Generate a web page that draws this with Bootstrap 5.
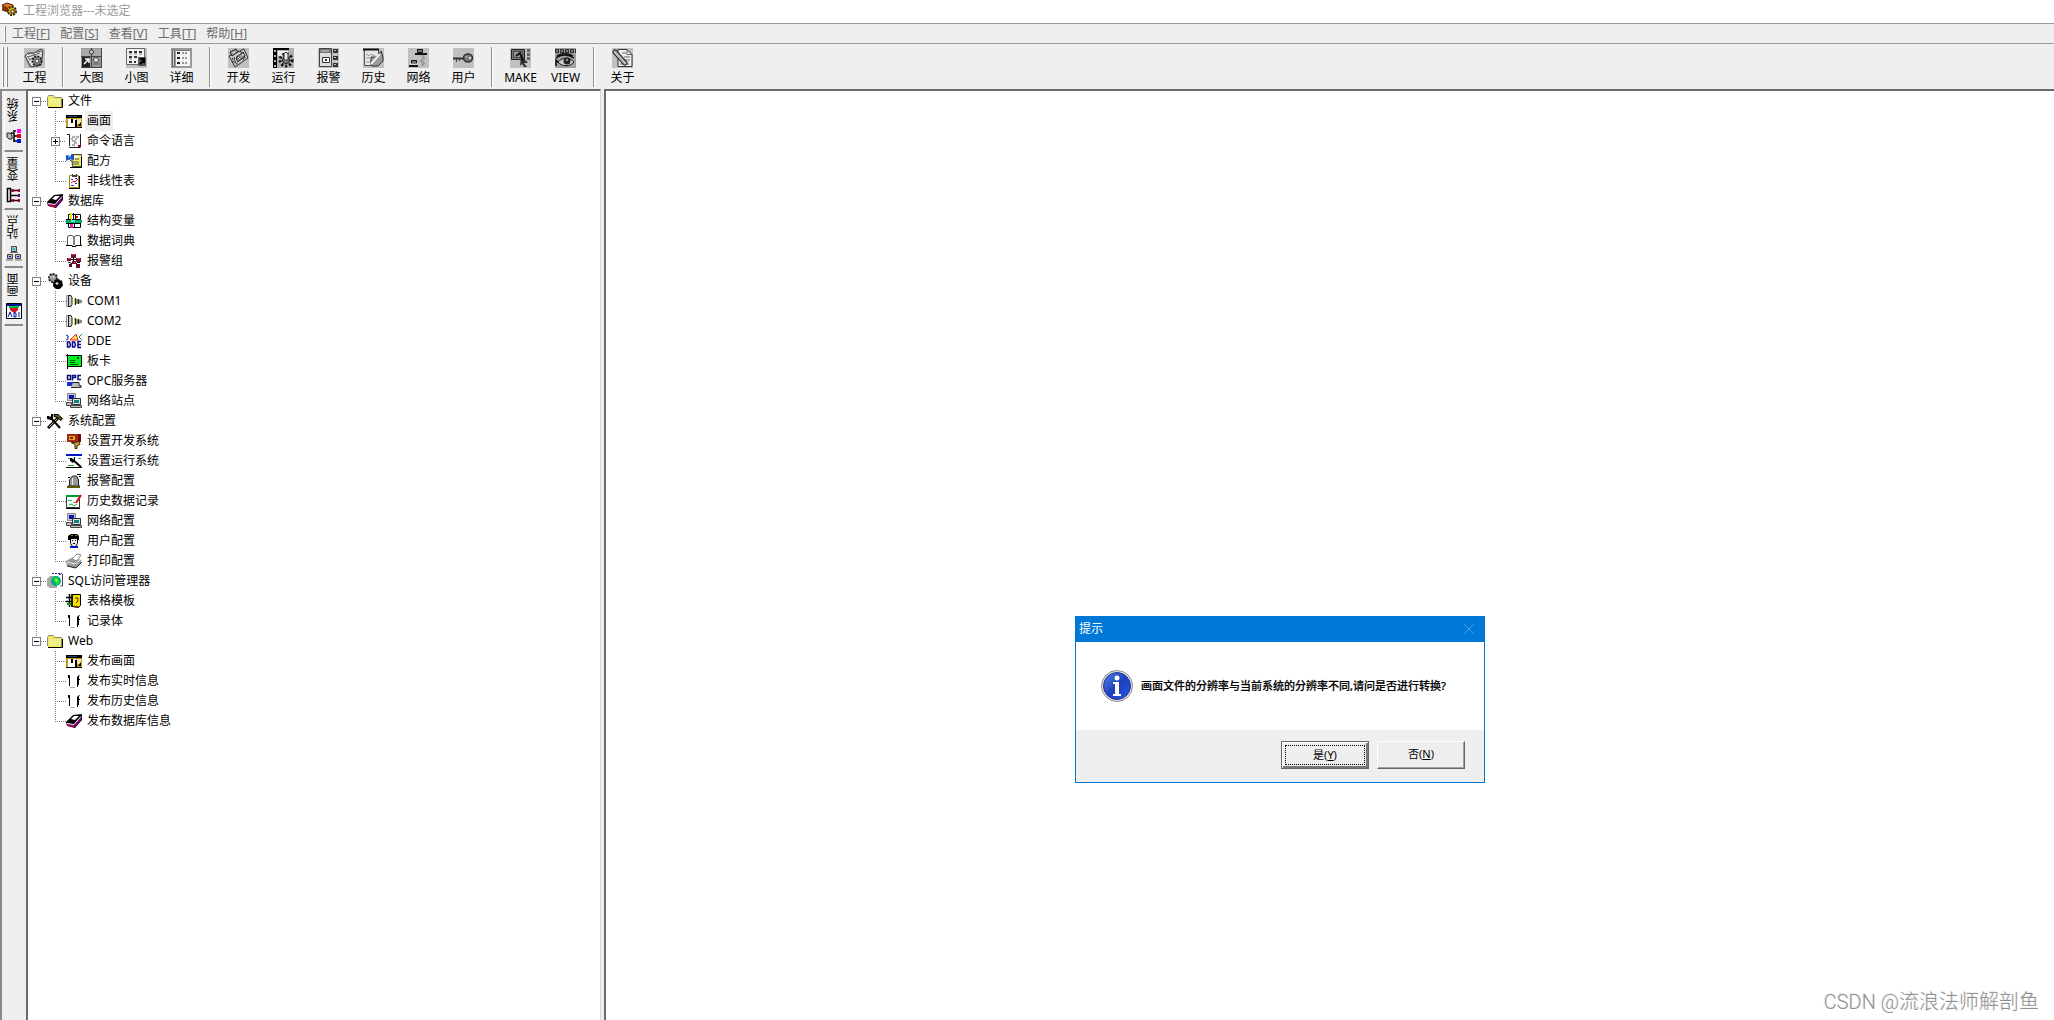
<!DOCTYPE html>
<html lang="zh-CN">
<head>
<meta charset="utf-8">
<meta name="viewport" content="width=device-width, initial-scale=1">
<title>工程浏览器---未选定</title>
<link href="https://cdn.jsdelivr.net/npm/bootstrap@5.3.0/dist/css/bootstrap.min.css" rel="stylesheet">
<style>
body{font:12px/20px "Noto Sans","Noto Sans CJK SC",sans-serif;color:#000;background:#fff}
a{color:inherit;text-decoration:none}
svg{display:block;flex:none}
.face{background:#efefef}
.title-strip{height:23px;color:#999;line-height:18px;padding:2px 2px 0;gap:5px}
.menu-strip{height:20px;border-top:1px solid #999;padding-left:4px;color:#6d6d6d;line-height:18px}
.menu-strip .grip{height:16px;margin-right:6px}
.menu-strip a{margin-right:10px}
.grip{width:2px;border-left:1px solid #fff;border-right:1px solid #8a8a8a}
.tool-strip{height:46px;border-top:1px solid #999;padding:3px 0 2px 2px}
.tool-strip .grip{margin-right:2px}
.tool-row{padding-left:2px}
.tool{width:45px;border:0;background:none;padding:1px 0 0;line-height:18px}
.tool svg{margin:0 auto 1px}
.rule{width:2px;height:40px;margin:0 5px;border-left:1px solid #8f8f8f;border-right:1px solid #fff}
.sunk{border-top:2px solid #6b6b6b;border-left:2px solid #6b6b6b}
.tabs-col{width:26px;border-top:2px solid #8a8a8a;border-left:2px solid #8a8a8a;padding-left:2px}
.side-tab{width:19px;height:58px;border:0;border-bottom:2px solid #8a8a8a;border-left:1px solid #fff;background:#efefef;padding:0 0 5px;gap:6px;line-height:14px}
.side-tab.on{height:61px;padding-bottom:6px}
.side-tab span{writing-mode:vertical-rl;transform:rotate(180deg)}
.tree-pane{flex:0 0 28%;border-right:1px solid #d8d8d8;margin-right:3px}
.tree ul,.tree{list-style:none;margin:0;padding:0}
.tree li{position:relative}
.node{height:20px}
.node svg{margin-right:3px}
.node a{padding:0 2px;white-space:nowrap}
.node a.sel{background:#efefef}
.tree>li>.node{padding-left:4px}
.tree ul .node{padding-left:23px}
.twig{height:1px;width:6px;background:repeating-linear-gradient(90deg,#808080 0 1px,#fff 1px 2px)}
.twig.long{width:11px;margin-left:4px}
.tree li::before{content:"";position:absolute;width:1px;left:8px;top:0;bottom:0;background:repeating-linear-gradient(#808080 0 1px,#fff 1px 2px)}
.tree ul li::before{left:27px}
.tree>li:first-child::before{top:10px}
.tree li:last-child::before{bottom:auto;height:10px}
.fold{width:9px;height:9px;border:1px solid #808080;background:#fff;padding:0;position:relative;z-index:1}
.fold::before,.fold.plus::after{content:"";position:absolute;left:1px;top:3px;width:5px;height:1px;background:#000}
.fold.plus::after{left:3px;top:1px;width:1px;height:5px}
.msgbox{position:absolute;left:1075px;top:616px;width:410px;border:1px solid #0078d7}
.msgbox header{height:25px;background:#0078d7;color:#fff;padding:0 10px 2px 3px}
.msgbox header button{border:0;background:none;padding:0}
.msg-body{height:88px;padding-left:25px;gap:8px;font-size:11px;font-weight:500;-webkit-text-stroke:.2px #000}
.msg-foot{height:52px;padding:11px 19px 0 0;gap:8px}
.push{width:88px;height:28px;font-size:11px;line-height:18px;padding:0 0 2px;background:#efefef;border:1px solid;border-color:#fff #666 #666 #fff;box-shadow:inset -1px -1px #a0a0a0}
.push.first{border:1px solid #666;padding:0;box-shadow:inset 1px 1px #fff,inset -2px -2px #777}
.push.first span{display:block;margin:3px;border:1px dotted #000}
.mark-text{position:absolute;right:15px;bottom:4px;font:20px/28px Roboto,"Noto Sans CJK SC",sans-serif;font-weight:300;color:#8f8f8f;text-shadow:-1px -1px #eee}
</style>
</head>
<body class="vh-100 overflow-hidden d-flex flex-column position-relative">

<svg width="0" height="0" class="position-absolute" aria-hidden="true"><defs>
<symbol id="i-folder" viewBox="0 0 16 16"><path d="M1 4h1V3h4v1h1v1h8v9H1z" fill="#eee85c"/><path d="M.5 13V4.500L1.500 2.500h5l1 2h7v9" fill="none" stroke="#8f8f66"/><path d="M2 7h12M2 9h12M2 11h12M4 6v7M7 6v7M10 6v7M12 6v7" stroke="#fff" stroke-dasharray="1 1" opacity=".7"/><path d="M1 14.500h14.500V6" fill="none" stroke="#000"/></symbol>
<symbol id="i-pic" viewBox="0 0 16 16"><path d="M0 2h16v13H0z" fill="#c79a1c"/><path d="M0 2h16v3H0z"/><path d="M2 3h9v1H2z" fill="#223c8c"/><path d="M2 6h8v8H2z" fill="#fff"/><path d="M5 6h2v4H5zM9 7h2v7H9z"/><path d="M11 6h4v5h-4z" fill="#eee2b0"/><path d="M12 13l3-4v4z"/><path d="M0 14h16v1H0z"/></symbol>
<symbol id="i-script" viewBox="0 0 16 16"><path d="M3 2h12v12H4z" fill="#f7f7f7"/><path d="M1 1.500h2.500V13M3 14.500h11.500M14.500 1v11" fill="none" stroke="#222"/><path d="M6 4h3m1 0h3M5 6h2m2 0h2M6 8h4M8 10h3M6 12h3" stroke="#666"/><path d="M12 12h3v2h-3z" fill="#a00000"/></symbol>
<symbol id="i-recipe" viewBox="0 0 16 16"><path d="M5.500 1.500h10v12h-9z" fill="#efe968" stroke="#444"/><path d="M4 14.500h11.500V4" stroke="#000" fill="none"/><path d="M0 2l5 1 3-2v6L4 6 0 8z" fill="#1553c8"/><path d="M2 4h3" stroke="#6cf"/><path d="M3 6l4 4M6 9h7M7 11h6M9 6h4" stroke="#555"/><path d="M8 3h4v2H8z" fill="#fff"/></symbol>
<symbol id="i-clip" viewBox="0 0 16 16"><path d="M3.500 2.500h9v12h-9z" fill="#fff" stroke="#a08410"/><path d="M3 15.500h11M13.500 3v12" stroke="#000"/><path d="M6 1h5v3H6z" fill="#444"/><path d="M7 1h3v1H7z" fill="#fff"/><path d="M5 10l3-2 1 1 3-3" fill="none" stroke="#e00020"/><path d="M5 6.500h2M9 5.500h2M5 12.500h3M9 10.500h2" stroke="#2233cc"/></symbol>
<symbol id="i-db" viewBox="0 0 16 16"><path d="M0 9l7-7 9-1v6l-7 8-8-2z" fill="#000"/><path d="M8 12l7-8v3l-6 7-8-2v-1z" fill="#8c0090"/><path d="M5 6l3-3h5l-4 4z" fill="#fff"/><path d="M1 10.500l7 1 7-8" fill="none" stroke="#fff"/><path d="M1 12l7 2" stroke="#f00040"/></symbol>
<symbol id="i-struct" viewBox="0 0 16 16"><path d="M2.500 1.500h12v5h-12zM2.500 9.500h12v5h-12z" fill="#fff" stroke="#000"/><path d="M4 0h2v12H4z" fill="#e6ee00"/><path d="M0 7h16v3H0z" fill="#00b060"/><path d="M5 7h4v2H5z" fill="#60e8f0"/><path d="M10 3h2v2h-2z" fill="#e00030"/><path d="M4 11h3v4H4z" fill="#e020b0"/><path d="M7.500 0v6M9.500 2v4M0 10.500h15M0 6.500h5M8.500 10v5" stroke="#000"/></symbol>
<symbol id="i-book" viewBox="0 0 16 16"><path d="M1.500 12V3.500L3 2.500h3l2 1.500 2-1.500h3l1.500 1V12" fill="#fff" stroke="#555"/><path d="M8 4v8M14.500 3v9M0 12.500h6.500M9.500 12.500H16M6 13.500h4" fill="none" stroke="#000"/></symbol>
<symbol id="i-alarmgrp" viewBox="0 0 16 16"><path d="M5 1h5v4H5zM1 5h4v3H1zM10 5h5v4h-5zM6 8h4v3H6zM3 11h3v3H3zM10 11h4v4h-4z" fill="#701038"/><path d="M7.500 4v4M2 9l3 1M14 9.500h-3M5 6.500h5M6 10l-2 2M10 10l2 2" stroke="#000"/><path d="M6 1.500h3M2 5.500h2M11 5.500h3M7 9.500h2" stroke="#e03050"/></symbol>
<symbol id="i-gears" viewBox="0 0 16 16"><circle cx="6" cy="5" r="4" fill="#999" stroke="#222" stroke-width="2" stroke-dasharray="2 1"/><path d="M7 9h8v5h-2v2H9l-3-3z"/><circle cx="11" cy="11" r="4" stroke="#000" stroke-width="2" stroke-dasharray="2 1"/><path d="M4 3v2M7 3v2M9 10h2v1H9z" stroke="#fff"/></symbol>
<symbol id="i-com" viewBox="0 0 16 16"><path d="M.5 2.500h2v11h-2z" fill="#ddd" stroke="#999"/><path d="M2.500 2v12M3 2.500h2l1 2v7l-1 2H3" fill="#ccc" stroke="#222"/><path d="M8 5l2 1 6 1v3l-6 1-2 1z" fill="#888"/><path d="M8.500 5v7" stroke="#e4e000"/><path d="M9.500 5v7M12.500 6v5" stroke="#222"/></symbol>
<symbol id="i-dde" viewBox="0 0 16 16"><path d="M0 2l2 1v3l-2 1" fill="none" stroke="#0020b0"/><path d="M16 1l-3 3 3 3" fill="none" stroke="#009030"/><path d="M4 7l6-6 2 6z" fill="#ffe080" stroke="#f02000"/><path d="M1.500 9v5h2l1-2-1-3zM6.500 9v5h2l1-2-1-3zM15 8.500h-3v6h3M12 11.500h3" fill="none" stroke="#0a0a80" stroke-width="1.500"/></symbol>
<symbol id="i-card" viewBox="0 0 16 16"><path d="M1 2h14v11H1z" fill="#00f020"/><path d="M0 2.500h15.500V13.500H1M1.500 1v15" fill="none" stroke="#000"/><path d="M4 7.500h5M4 9.500h5M4 11.500h8" stroke="#006000"/><path d="M11 4h2v2h-2z" fill="#006000"/></symbol>
<symbol id="i-opc" viewBox="0 0 16 16"><path d="M1.500 2.500h3v4h-3zM6.500 7.500v-5h3v2h-3M15 2.500h-3v4h3" fill="none" stroke="#10107c" stroke-width="1.500"/><path d="M1 9h7v4H1z" fill="#1030c8"/><path d="M7 9.500h6v3h2v2H5" fill="#bbb" stroke="#222"/></symbol>
<symbol id="i-net" viewBox="0 0 16 16"><path d="M1.500.5h8v7h-8z" fill="#ccc" stroke="#888"/><path d="M3 2h5v4H3z" fill="#0018b0"/><path d="M6.500 5.500h8v6h-8z" fill="#ddd" stroke="#333"/><path d="M8 7h5v3H8z" fill="#008878"/><path d="M.5 9.500h5v3h-5zM4.500 12.500h11v2h-11z" fill="#c5c5c5" stroke="#444"/></symbol>
<symbol id="i-tools" viewBox="0 0 16 16"><path d="M1 15L11 5" stroke="#000" stroke-width="3"/><path d="M2 14l8-8" stroke="#d9b070"/><path d="M7 1.500h4l4.500 4-1.500 2-3.500-3-3.500-1z" fill="#6b5a1c" stroke="#000"/><path d="M4 5l9 10" stroke="#000" stroke-width="2"/><path d="M0 3h2l1 1 1-1V1h2v4L4 7 0 6z"/></symbol>
<symbol id="i-dev" viewBox="0 0 16 16"><path d="M1 1h11v8H1z" fill="#a02c18"/><path d="M3 3h6v4H3z" fill="#e0b020"/><path d="M4 4h3v2H4z" fill="#802010"/><path d="M12 1h3v8h-3z" fill="#780808"/><path d="M5 9.500h4l4-1 1 3-3 1v3H9v-4z" fill="#d0a830" stroke="#40280c"/></symbol>
<symbol id="i-run" viewBox="0 0 16 16"><path d="M0 1h16v13H0z" fill="#fff"/><path d="M0 1h16v2H0z" fill="#0018c8"/><path d="M0 14.500h16" stroke="#000"/><path d="M2 5.500h4M2 12.500h6M12 5.500h3" stroke="#20b040"/><path d="M6 6l9 8" stroke="#000" stroke-width="2"/><path d="M4 5h2v2h2V4h1v4L7 10 4 8z"/></symbol>
<symbol id="i-bell" viewBox="0 0 16 16"><path d="M3.500 12V7l3-4h4l2 4v5l1 1h-11z" fill="#999" stroke="#222"/><path d="M6.500 5v7" stroke="#eee"/><path d="M1 13h13v2H1z" fill="#5c5800"/><path d="M11 1.500h4M13 3.500h2M2 4.500h2" stroke="#000"/></symbol>
<symbol id="i-hist" viewBox="0 0 16 16"><path d="M.5 2.500h13v12H.5z" fill="#fff" stroke="#333"/><path d="M0 3h14" stroke="#00a030" stroke-width="2"/><path d="M2 7.500h4M7 9.500h2M3 12l3-1 2 2 3-2" fill="none" stroke="#10c040"/><path d="M0 15.500h14" stroke="#000"/><path d="M15 2l-5 8" stroke="#e01020" stroke-width="2"/></symbol>
<symbol id="i-user" viewBox="0 0 16 16"><path d="M4.500 5.500h7v5l-2 3h-3l-2-3z" fill="#eee" stroke="#000"/><path d="M2 3l3-2h6l2 2v4h-1L10 5H6L4 7H2z"/><path d="M6 7.500h1M9 7.500h1M7 10.500h2" stroke="#000"/><path d="M4 13h8v2H4z" fill="#0018b0"/><path d="M5 2.500h2M9 2.500h2" stroke="#888020"/></symbol>
<symbol id="i-print" viewBox="0 0 16 16"><path d="M0 8l7-4 8 3v3l-5 5-9-2z" fill="#999"/><path d="M6 6l5-5 4 1-4 6z" fill="#fff" stroke="#888"/><path d="M1 9l8 2 5-4" stroke="#eee" fill="none"/><path d="M1 13l9 2 6-6" stroke="#222" fill="none"/></symbol>
<symbol id="i-sql" viewBox="0 0 16 16"><path d="M0 6l3-3h7v12H3l-3-2z" fill="#a6a6a6"/><circle cx="9" cy="8" r="5" fill="#00a880"/><path d="M6 5l4-1 3 5-3 4-2-4z" fill="#20dc40"/><path d="M8 7l2-1v3z" fill="#ff0"/><path d="M5 .5h10" stroke="#1020a0" stroke-dasharray="2 1"/><path d="M12 1.500h2M15.500 1v12h-2" fill="none" stroke="#446"/></symbol>
<symbol id="i-tmpl" viewBox="0 0 16 16"><path d="M6 1.500h8.500v11l-2 2-6.500-1z" fill="#f2e400" stroke="#000"/><path d="M0 4.500h7M0 8.500h6M3.500 1v13M6 1v13" stroke="#000" stroke-width="1.500"/><path d="M1 10h4v2H1z" fill="#00a000"/><path d="M9 5h3v3l-2 2M8 13l5 1" fill="none" stroke="#702000"/></symbol>
<symbol id="i-rec" viewBox="0 0 16 16"><path d="M2 2.500h1.500V13M11.500 14V4l2-2M11 6.500h3M12.500 3v9" fill="none" stroke="#000"/><path d="M4 14.500h5" stroke="#aaa"/><path d="M2.500 3v2" stroke="#000"/></symbol>
<symbol id="s-sys" viewBox="0 0 16 16"><path d="M1 5h3l2 2v4H3L1 9z" fill="#bbb" stroke="#222"/><path d="M5 5h3v9M7 3h3M8 8h3M8 13h3" stroke="#000" stroke-width="1.500" fill="none"/><path d="M11 1h4v4h-4z" fill="#f0f"/><path d="M11 6h4v4h-4z" fill="#e00020"/><path d="M11 11h4v4h-4z" fill="#0018d0"/></symbol>
<symbol id="s-var" viewBox="0 0 16 16"><path d="M1.500 1.500h3v13h-3zM4 3.500h8M4 8.500h8M4 13.500h8" fill="#fff" stroke="#000" stroke-width="1.500"/><path d="M6 2h2v3H6zM12 2h2v3h-2zM6 12h2v3H6zM12 12h2v3h-2z" fill="#c00020"/><path d="M12 7h2v3h-2z" fill="#60a"/></symbol>
<symbol id="s-site" viewBox="0 0 16 16"><path d="M5.500 1.500h5v5h-5zM1.500 9.500h5v4h-5zM9.500 9.500h5v4h-5z" fill="#bbb" stroke="#444"/><path d="M7 3h2v2H7z" fill="#0cc"/><path d="M3 11h2v1H3zM11 11h2v1h-2z" fill="#00f"/><path d="M0 15h7M9 15h7M4 7.500h8" stroke="#666"/></symbol>
<symbol id="s-pic" viewBox="0 0 16 16"><path d="M.5.500h15v15H.5z" fill="#fff" stroke="#000"/><path d="M1 1h14v2H1z" fill="#0018a0"/><path d="M3 3h10v2H3z" fill="#00c030"/><path d="M4 5h8v2l-3 3H8L4 7z" fill="#e01020"/><path d="M2 14l2-5 2 5M8 14v-4h2v4zM13 9v5" fill="none" stroke="#0010b0"/></symbol>
<symbol id="i-app" viewBox="0 0 16 16"><path d="M0 3l5-2 6 2v5l-5 2-6-2z" fill="#c87828" stroke="#602800"/><path d="M1 3l5 3v4l-5-2z" fill="#8a3008"/><circle cx="10" cy="9" r="4" fill="#dcc810" stroke="#382800" stroke-width="2" stroke-dasharray="2 1"/><path d="M9 8h3v3H9z" fill="#fff" stroke="#422"/></symbol>
<symbol id="t-bg" viewBox="0 0 21 20"><path d="M0 0h21v20H0z" fill="#c0c0c0"/></symbol>
<symbol id="t-proj" viewBox="0 0 21 20"><use href="#t-bg"/><path d="M1 8l3-3h6l7-4 2 2-2 14-10 2z" fill="#ddd" stroke="#333"/><path d="M1 8l5 11M4 6l14-3M4 9l12-4M5 12l6-3M3 8l3 4M9 5l2 4" stroke="#666"/><circle cx="13" cy="13" r="4.500" fill="#999" stroke="#222" stroke-width="2" stroke-dasharray="2 1"/><circle cx="13" cy="13" r="2" fill="#eee" stroke="#333"/></symbol>
<symbol id="t-large" viewBox="0 0 21 20"><path d="M0 0h21v20H0z" fill="#999"/><path d="M1 1h9v7H1zM12 1h8v7h-8z" fill="#a9a9a9"/><path d="M10.500 0v20M0 8.500h21M0 19.500h21M20.500 0v20" stroke="#444"/><circle cx="10.500" cy="4" r="2" fill="#ddd" stroke="#333"/><path d="M1 9h8v10H1z" fill="#222"/><path d="M3 16l4-4M4 11h4v4" stroke="#fff" stroke-width="1.500" fill="none"/><circle cx="15" cy="12" r="2.500" fill="#ddd" stroke="#444"/><path d="M12 16h7" stroke="#666"/></symbol>
<symbol id="t-small" viewBox="0 0 21 20"><use href="#t-bg"/><path d="M.5.500h18v16H.5z" fill="#f2f2f2" stroke="#666"/><path d="M3 4h3M8 4h3M13 4h3M3 9h3M8 9h3M3 14h3M8 14h2" stroke="#333" stroke-width="2"/><path d="M3 6h3m2 0h3m2 0h3M3 11h3" stroke="#888"/><path d="M12 9h8v9h-8z" fill="#555"/><path d="M14 16l4-4M14 11h4v4" fill="none" stroke="#000" stroke-width="2"/></symbol>
<symbol id="t-detail" viewBox="0 0 21 20"><path d="M0 0h21v20H0z" fill="#999"/><path d="M1.500 1.500h2v17h-2z" fill="#ccc" stroke="#666"/><path d="M5 2h14v16H5z" fill="#f4f4f4"/><path d="M6 5h3M6 10h3M6 15h3" stroke="#222" stroke-width="2"/><path d="M11 5h6M11 10h6M11 15h6" stroke="#444" stroke-dasharray="2 1"/><path d="M5 2.500h14" stroke="#777"/></symbol>
<symbol id="t-dev" viewBox="0 0 21 20"><use href="#t-bg"/><path d="M1 8L16 1l4 9L7 19z" fill="#ccc" stroke="#333"/><path d="M2 4l6-3 2 3-6 4zM8 10l7-6 2 4-7 6z" fill="#999" stroke="#222"/><path d="M4 11l3-1M5 14l2-2M17 9l-3 3M7 14l3 3M12 3l3 3M9 8l3 3" stroke="#222" stroke-width="2" stroke-dasharray="1 1"/><path d="M10 9l2 2M5 5l2-1M14 7h2" stroke="#fff"/></symbol>
<symbol id="t-run" viewBox="0 0 21 20"><path d="M0 0h21v20H0z" fill="#b0b0b0"/><path d="M0 0h4v20H0zM4 0h12v2H4z"/><path d="M1 2h2v2H1zM1 7h2v2H1zM1 12h2v2H1zM1 17h2v2H1z" fill="#bbb"/><path d="M5 3h10v5H5z" fill="#eee"/><circle cx="13" cy="12" r="6" fill="#aaa" stroke="#111" stroke-width="3" stroke-dasharray="2 2"/><circle cx="13" cy="12" r="3.500" fill="#888" stroke="#111"/><path d="M11 12V6l2-2 2 2v6z" fill="#eee" stroke="#333"/></symbol>
<symbol id="t-alarm" viewBox="0 0 21 20"><use href="#t-bg"/><path d="M1.500.5h12v18h-12z" fill="#ddd" stroke="#444"/><path d="M2 1h11v4H2z" fill="#777"/><path d="M3 3h8" stroke="#ccc"/><path d="M4.500 9.500h7v5h-7z" fill="#fff" stroke="#333"/><path d="M7 12h2" stroke="#333" stroke-width="2"/><path d="M15 1h5v4h-5zM15 8h5v4h-5zM15 15h5v4h-5z" fill="#333"/><path d="M16 2.500h2M16 9.500h2M16 16.500h2" stroke="#bbb"/></symbol>
<symbol id="t-hist" viewBox="0 0 21 20"><use href="#t-bg"/><path d="M1.500 1.500h14v16h-14z" fill="#e7e7e7" stroke="#555"/><path d="M0 1.500h16" stroke="#111" stroke-width="2"/><path d="M3 6l3 2 2-2 4 2M3 10h4M3 14h5" fill="none" stroke="#999"/><path d="M8 16V9h6l4-6 2 6v4l-5 5H9z" fill="#999" stroke="#333"/><path d="M8 16l9-10" stroke="#eee" stroke-width="2"/></symbol>
<symbol id="t-net" viewBox="0 0 21 20"><use href="#t-bg"/><path d="M9.500 1.500h5v3h-5zM3.500 12.500h5v3h-5z" fill="#777" stroke="#111"/><path d="M7 6h12M1 18h9" stroke="#111" stroke-width="2"/><path d="M2 16h8" stroke="#eee"/><path d="M14 7l2 3-3 3 3 2-2 3" fill="none" stroke="#999" stroke-width="2"/></symbol>
<symbol id="t-user" viewBox="0 0 21 20"><use href="#t-bg"/><path d="M0 10.500h12" stroke="#333" stroke-width="2"/><path d="M3.500 11v3M6.500 11v2" stroke="#444"/><path d="M1 9.500h11" stroke="#777"/><ellipse cx="15" cy="10" rx="4.500" ry="4" fill="#777" stroke="#333" stroke-width="1.500"/><path d="M12 9h3" stroke="#bbb"/><path d="M16 9h2v2h-2z" fill="#ddd"/></symbol>
<symbol id="t-make" viewBox="0 0 21 20"><use href="#t-bg"/><path d="M1.500 1.500h13v10h-13z" fill="#777" stroke="#222"/><path d="M3.500 3.500h9v6h-9z" fill="#999" stroke="#444"/><path d="M17 1h3v3h-3zM17 5h3v3h-3zM17 9h3v3h-3z" fill="#666"/><path d="M11 7l7 8h-4l3 4h-3l-2-3-2 2z" fill="#333"/><path d="M6 8l4-3 3 8" fill="none" stroke="#111" stroke-width="2"/></symbol>
<symbol id="t-view" viewBox="0 0 21 20"><path d="M0 0h21v20H0z" fill="#a0a0a0"/><path d="M0 3h21" stroke="#333" stroke-width="4" stroke-dasharray="4 1"/><path d="M1 3h2m3 0h2m3 0h2m3 0h2" stroke="#bbb"/><path d="M1 10c5-4 12-4 18 0M2 8c5-3 11-3 16 0M1 18V12l3 3" stroke="#111" stroke-width="1.500" fill="none"/><path d="M3 14c4-5 12-5 16 0-4 5-12 5-16 0z" fill="#ccc" stroke="#111"/><circle cx="12" cy="13" r="3.500" fill="#222"/><path d="M11 12h2" stroke="#fff"/></symbol>
<symbol id="t-about" viewBox="0 0 21 20"><use href="#t-bg"/><path d="M6 1.500h9l5 5v12H6z" fill="#eee" stroke="#333"/><path d="M15 1v5.500h5M10 5h4M12 9h6M13 12h5M8 16h9" fill="none" stroke="#666"/><path d="M3 4l10 11" stroke="#222" stroke-width="5" stroke-linecap="round"/><path d="M3 4l10 11" stroke="#bbb" stroke-width="3" stroke-linecap="round"/><path d="M5 4l9 10" stroke="#555"/></symbol>
</defs></svg>

<header class="title-strip d-flex"><svg width="16" height="16"><use href="#i-app"/></svg><span>工程浏览器---未选定</span></header>
<nav class="menu-strip face d-flex align-items-center" aria-label="菜单">
<span class="grip"></span><a href="#">工程[<u>F</u>]</a><a href="#">配置[<u>S</u>]</a><a href="#">查看[<u>V</u>]</a><a href="#">工具[<u>T</u>]</a><a href="#">帮助[<u>H</u>]</a>
</nav>
<div class="tool-strip face d-flex" role="toolbar" aria-label="工具">
<span class="grip"></span><span class="grip"></span>
<div class="tool-row d-flex">
<button class="tool"><svg width="21" height="20"><use href="#t-proj"/></svg>工程</button><span class="rule"></span>
<button class="tool"><svg width="21" height="20"><use href="#t-large"/></svg>大图</button>
<button class="tool"><svg width="21" height="20"><use href="#t-small"/></svg>小图</button>
<button class="tool"><svg width="21" height="20"><use href="#t-detail"/></svg>详细</button><span class="rule"></span>
<button class="tool"><svg width="21" height="20"><use href="#t-dev"/></svg>开发</button>
<button class="tool"><svg width="21" height="20"><use href="#t-run"/></svg>运行</button>
<button class="tool"><svg width="21" height="20"><use href="#t-alarm"/></svg>报警</button>
<button class="tool"><svg width="21" height="20"><use href="#t-hist"/></svg>历史</button>
<button class="tool"><svg width="21" height="20"><use href="#t-net"/></svg>网络</button>
<button class="tool"><svg width="21" height="20"><use href="#t-user"/></svg>用户</button><span class="rule"></span>
<button class="tool"><svg width="21" height="20"><use href="#t-make"/></svg>MAKE</button>
<button class="tool"><svg width="21" height="20"><use href="#t-view"/></svg>VIEW</button><span class="rule"></span>
<button class="tool"><svg width="21" height="20"><use href="#t-about"/></svg>关于</button>
</div>
</div>

<main class="face d-flex flex-grow-1 overflow-hidden">
<div class="tabs-col d-flex flex-column flex-shrink-0">
<button class="side-tab on d-flex flex-column align-items-center justify-content-end"><span>系统</span><svg width="16" height="16"><use href="#s-sys"/></svg></button>
<button class="side-tab d-flex flex-column align-items-center justify-content-end"><span>变量</span><svg width="16" height="16"><use href="#s-var"/></svg></button>
<button class="side-tab d-flex flex-column align-items-center justify-content-end"><span>站点</span><svg width="16" height="16"><use href="#s-site"/></svg></button>
<button class="side-tab d-flex flex-column align-items-center justify-content-end"><span>画面</span><svg width="16" height="16"><use href="#s-pic"/></svg></button>
</div>
<div class="tree-pane sunk bg-white">
<ul class="tree">
<li><div class="node d-flex align-items-center"><button class="fold" aria-label="折叠"></button><i class="twig"></i><svg width="16" height="16"><use href="#i-folder"/></svg><a href="#">文件</a></div>
<ul>
<li><div class="node d-flex align-items-center"><i class="twig long"></i><svg width="16" height="16"><use href="#i-pic"/></svg><a href="#" class="sel">画面</a></div></li>
<li><div class="node d-flex align-items-center"><button class="fold plus" aria-label="展开"></button><i class="twig"></i><svg width="16" height="16"><use href="#i-script"/></svg><a href="#">命令语言</a></div></li>
<li><div class="node d-flex align-items-center"><i class="twig long"></i><svg width="16" height="16"><use href="#i-recipe"/></svg><a href="#">配方</a></div></li>
<li><div class="node d-flex align-items-center"><i class="twig long"></i><svg width="16" height="16"><use href="#i-clip"/></svg><a href="#">非线性表</a></div></li>
</ul></li>
<li><div class="node d-flex align-items-center"><button class="fold" aria-label="折叠"></button><i class="twig"></i><svg width="16" height="16"><use href="#i-db"/></svg><a href="#">数据库</a></div>
<ul>
<li><div class="node d-flex align-items-center"><i class="twig long"></i><svg width="16" height="16"><use href="#i-struct"/></svg><a href="#">结构变量</a></div></li>
<li><div class="node d-flex align-items-center"><i class="twig long"></i><svg width="16" height="16"><use href="#i-book"/></svg><a href="#">数据词典</a></div></li>
<li><div class="node d-flex align-items-center"><i class="twig long"></i><svg width="16" height="16"><use href="#i-alarmgrp"/></svg><a href="#">报警组</a></div></li>
</ul></li>
<li><div class="node d-flex align-items-center"><button class="fold" aria-label="折叠"></button><i class="twig"></i><svg width="16" height="16"><use href="#i-gears"/></svg><a href="#">设备</a></div>
<ul>
<li><div class="node d-flex align-items-center"><i class="twig long"></i><svg width="16" height="16"><use href="#i-com"/></svg><a href="#">COM1</a></div></li>
<li><div class="node d-flex align-items-center"><i class="twig long"></i><svg width="16" height="16"><use href="#i-com"/></svg><a href="#">COM2</a></div></li>
<li><div class="node d-flex align-items-center"><i class="twig long"></i><svg width="16" height="16"><use href="#i-dde"/></svg><a href="#">DDE</a></div></li>
<li><div class="node d-flex align-items-center"><i class="twig long"></i><svg width="16" height="16"><use href="#i-card"/></svg><a href="#">板卡</a></div></li>
<li><div class="node d-flex align-items-center"><i class="twig long"></i><svg width="16" height="16"><use href="#i-opc"/></svg><a href="#">OPC服务器</a></div></li>
<li><div class="node d-flex align-items-center"><i class="twig long"></i><svg width="16" height="16"><use href="#i-net"/></svg><a href="#">网络站点</a></div></li>
</ul></li>
<li><div class="node d-flex align-items-center"><button class="fold" aria-label="折叠"></button><i class="twig"></i><svg width="16" height="16"><use href="#i-tools"/></svg><a href="#">系统配置</a></div>
<ul>
<li><div class="node d-flex align-items-center"><i class="twig long"></i><svg width="16" height="16"><use href="#i-dev"/></svg><a href="#">设置开发系统</a></div></li>
<li><div class="node d-flex align-items-center"><i class="twig long"></i><svg width="16" height="16"><use href="#i-run"/></svg><a href="#">设置运行系统</a></div></li>
<li><div class="node d-flex align-items-center"><i class="twig long"></i><svg width="16" height="16"><use href="#i-bell"/></svg><a href="#">报警配置</a></div></li>
<li><div class="node d-flex align-items-center"><i class="twig long"></i><svg width="16" height="16"><use href="#i-hist"/></svg><a href="#">历史数据记录</a></div></li>
<li><div class="node d-flex align-items-center"><i class="twig long"></i><svg width="16" height="16"><use href="#i-net"/></svg><a href="#">网络配置</a></div></li>
<li><div class="node d-flex align-items-center"><i class="twig long"></i><svg width="16" height="16"><use href="#i-user"/></svg><a href="#">用户配置</a></div></li>
<li><div class="node d-flex align-items-center"><i class="twig long"></i><svg width="16" height="16"><use href="#i-print"/></svg><a href="#">打印配置</a></div></li>
</ul></li>
<li><div class="node d-flex align-items-center"><button class="fold" aria-label="折叠"></button><i class="twig"></i><svg width="16" height="16"><use href="#i-sql"/></svg><a href="#">SQL访问管理器</a></div>
<ul>
<li><div class="node d-flex align-items-center"><i class="twig long"></i><svg width="16" height="16"><use href="#i-tmpl"/></svg><a href="#">表格模板</a></div></li>
<li><div class="node d-flex align-items-center"><i class="twig long"></i><svg width="16" height="16"><use href="#i-rec"/></svg><a href="#">记录体</a></div></li>
</ul></li>
<li><div class="node d-flex align-items-center"><button class="fold" aria-label="折叠"></button><i class="twig"></i><svg width="16" height="16"><use href="#i-folder"/></svg><a href="#">Web</a></div>
<ul>
<li><div class="node d-flex align-items-center"><i class="twig long"></i><svg width="16" height="16"><use href="#i-pic"/></svg><a href="#">发布画面</a></div></li>
<li><div class="node d-flex align-items-center"><i class="twig long"></i><svg width="16" height="16"><use href="#i-rec"/></svg><a href="#">发布实时信息</a></div></li>
<li><div class="node d-flex align-items-center"><i class="twig long"></i><svg width="16" height="16"><use href="#i-rec"/></svg><a href="#">发布历史信息</a></div></li>
<li><div class="node d-flex align-items-center"><i class="twig long"></i><svg width="16" height="16"><use href="#i-db"/></svg><a href="#">发布数据库信息</a></div></li>
</ul></li>
</ul>
</div>
<div class="sunk bg-white flex-grow-1"></div>
</main>

<section class="msgbox bg-white" role="dialog" aria-labelledby="msg-title">
<header class="d-flex justify-content-between align-items-center"><span id="msg-title">提示</span><button aria-label="关闭"><svg width="10" height="10"><path d="M0 0l10 10M10 0L0 10" stroke="#4a9be2"/></svg></button></header>
<div class="msg-body d-flex align-items-center"><svg width="32" height="32" viewBox="0 0 32 32"><defs><linearGradient id="ball" x2="1" y2="1"><stop stop-color="#5a86e0"/><stop offset=".5" stop-color="#1d3fc0"/><stop offset="1" stop-color="#2a5ae0"/></linearGradient></defs><circle cx="16" cy="16" r="15.500" fill="#e6e6e6" stroke="#8a8a8a"/><circle cx="16" cy="16" r="13.500" fill="url(#ball)" stroke="#1c349c"/><circle cx="16" cy="8" r="2.500" fill="#fff"/><path d="M12 12h6v12h2v2h-8v-2h2V14h-2z" fill="#fff"/></svg><span>画面文件的分辨率与当前系统的分辨率不同,请问是否进行转换?</span></div>
<div class="msg-foot face d-flex justify-content-end"><button class="push first"><span>是(<u>Y</u>)</span></button><button class="push">否(<u>N</u>)</button></div>
</section>
<div class="mark-text">CSDN @流浪法师解剖鱼</div>

<script src="https://cdn.jsdelivr.net/npm/bootstrap@5.3.0/dist/js/bootstrap.bundle.min.js"></script>
</body>
</html>
